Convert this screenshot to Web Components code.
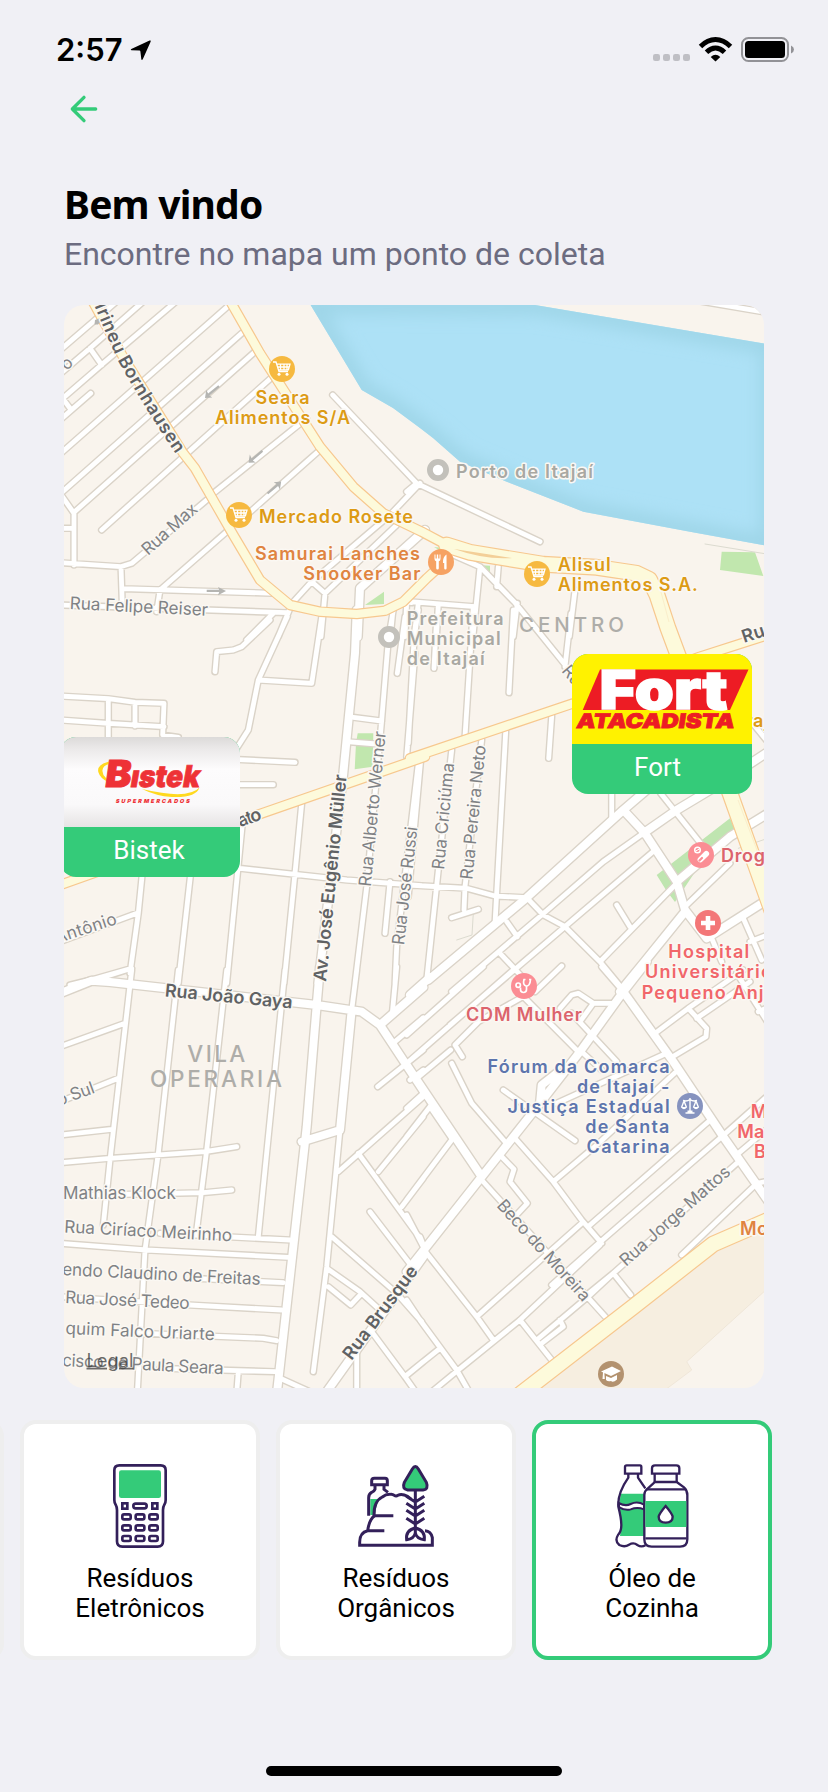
<!DOCTYPE html>
<html lang="pt-BR">
<head>
<meta charset="utf-8">
<title>Pontos de coleta</title>
<style>
html,body{margin:0;padding:0;background:#f0f0f5}
body{width:828px;height:1792px;overflow:hidden;font-family:Roboto,"Liberation Sans",sans-serif}
</style>
</head>
<body>
<collect-screen></collect-screen>
<script>
const define = (name, html, setup) => {
  const tpl = document.createElement('template');
  tpl.innerHTML = html;
  customElements.define(name, class extends HTMLElement {
    constructor() {
      super();
      this.attachShadow({ mode: 'open' }).appendChild(tpl.content.cloneNode(true));
    }
    connectedCallback() { if (setup) setup(this.shadowRoot, this); }
  });
};

/* ---------- status bar ---------- */
define('status-bar', `
<style>
:host{display:flex;justify-content:space-between;align-items:flex-start;height:89px;box-sizing:border-box;padding:31px 33px 0 56px;color:#000}
.left{display:flex;gap:7px}
.time{font:600 31px/37px Inter,sans-serif}
.left svg{margin-top:8px}
.right{margin-top:4px}
</style>
<div class="left"><span class="time">2:57</span>
<svg width="22" height="22" viewBox="0 0 22 22"><path d="M1.3 10 19.6 1.6Q21.300 1 20.600 2.700L12.800 20.200Q11.600 21.800 11.300 20L10.400 12.400Q10.300 11.700 9.500 11.600L1.400 11.300Q.100 10.800 1.300 10Z"/></svg></div>
<svg class="right" width="142" height="28" viewBox="653 35 142 28">
<g fill="#bfbfc4"><rect x="653" y="54" width="7" height="7" rx="2.200"/><rect x="663" y="54" width="7" height="7" rx="2.200"/><rect x="673" y="54" width="7" height="7" rx="2.200"/><rect x="683" y="54" width="7" height="7" rx="2.200"/></g>
<g fill="none" stroke="#000" stroke-width="4.900"><path d="M700.500 46.500Q707.500 39.500 715.500 39.500T730.500 46.500"/><path d="M706.500 52.300Q710.800 48 715.500 48T724.500 52.300"/></g>
<path d="M710.700 57Q715.500 52.600 720.300 57L715.500 61.500Z"/>
<rect x="742" y="38" width="46" height="23" rx="6.500" fill="none" stroke="#929296" stroke-width="2"/>
<rect x="745" y="41" width="40" height="17" rx="3.500"/>
<path d="M791 45.500Q794 47 794 49.500T791 53.500Z" fill="#929296"/>
</svg>`);

/* ---------- header ---------- */
define('page-header', `
<style>
:host{display:flex;flex-direction:column;padding:0 64px;height:216px;box-sizing:border-box}
h1{margin:49px 0 0;font:700 39px/52px "Noto Sans",sans-serif;color:#000;letter-spacing:-.8px}
p{margin:5px 0 0;font:400 32px/38px Roboto,sans-serif;color:#6c6c80;white-space:nowrap}
svg{display:block}
</style>
<svg width="40" height="40" viewBox="0 0 24 24" fill="none" stroke="#34cb79" stroke-width="2" stroke-linecap="round" stroke-linejoin="round"><path d="M19 12H5M12 19l-7-7 7-7"/></svg>
<h1><slot name="title"></slot></h1>
<p><slot name="subtitle"></slot></p>`);

/* ---------- marker ---------- */
define('map-marker', `
<style>
:host{display:flex;flex-direction:column;position:absolute;width:180px;height:140px;border-radius:16px;overflow:hidden;background:#34cb79}
.pic{height:90px}
.pic ::slotted(svg){display:block}
.name{flex:1;display:flex;align-items:center;justify-content:center;color:#fff;font:400 26px/30px Roboto,sans-serif;padding:0 var(--name-shift,2px) 5px 0}
</style>
<div class="pic"><slot></slot></div><div class="name"><slot name="name"></slot></div>`);

/* ---------- category card ---------- */
define('item-card', `
<style>
:host{display:flex;flex:none;flex-direction:column;align-items:center;width:240px;height:240px;box-sizing:border-box;border:4px solid #eee;border-radius:16px;background:#fff;padding-top:40px}
:host([selected]){border-color:#34cb79}
.icon{width:84px;height:84px}
.icon ::slotted(svg){display:block;width:84px;height:84px}
.label{margin-top:15px;width:150px;text-align:center;font:400 26px/30px Roboto,sans-serif;color:#000}
</style>
<div class="icon"><slot name="icon"></slot></div><div class="label"><slot></slot></div>`);

define('home-indicator', `
<style>:host{display:block;width:296px;height:10px;border-radius:5px;background:#000;margin:106px auto 0}</style>`);

/* ---------- street map ---------- */
/* Each sheet has an origin in screen pixels; its points are in thirds of a pixel. */
const SHEETS = {
  A: [60, 300], B: [410, 300], C: [60, 620], D: [410, 620], E: [60, 970], F: [410, 970]
};
const MINOR = {
 A: `-5,155 175,0|0,222 90,145 255,0|0,302 130,190 350,3|90,145 125,195|92,280 0,360|0,285 30,325|0,462 505,18|0,582 545,100|42,637 585,155|125,690 640,228|460,580 740,355|440,600 215,790 182,800 0,788|560,645 740,485 780,450|500,695 300,870 290,935|0,580 42,640 42,795|0,685 42,685|183,800 187,915|190,866 640,880|0,915 680,938|690,925 655,1010|690,920 705,900 755,845 990,645 1080,550|755,845 795,880 1010,675|795,880 783,1010|640,940 560,1020|818,285 1070,550|1000,920 990,1020|1030,905 1055,908|1040,905 1035,1010`,
 B: `-10,575 20,550|20,550 390,725|130,765 210,800 315,908 390,1000|0,905 195,920|210,800 190,1000|25,910 12,1010|85,912 80,1000|322,910 310,1010|495,870 478,1010|265,800 260,860|850,0 1110,44`,
 C: `630,0 545,80 520,90 470,95 465,155|682,-10 595,180 565,330 530,385|785,-10 755,190 595,180|0,228 145,236 225,247 312,250 308,345 355,352|145,236 145,360|225,247 225,318|0,300 145,310 312,320|880,292 965,303|860,365 950,372|520,418 705,427|520,494 640,494|725,550 705,760 672,1090|548,600 500,1090|540,745 860,780 1085,797|392,760 355,1090|247,760 235,880 210,1060|0,965 235,878|30,1095 100,1078 215,1045|990,785 975,940|1000,-30 985,60 965,300 920,800 885,1090|1035,-10 1012,160|1065,100 1040,410|1075,430 1010,980 1005,1090`,
 D: `25,-30 12,60 -5,370|32,420 -5,830|80,-10 72,145|190,-40 165,350|310,-30 297,218|483,-20 465,140|365,10 470,140 530,230|125,390 85,750 50,1080|215,360 165,800 162,870|125,893 205,868|287,335 255,910|425,288 416,415|605,510 605,600|-5,795 170,805 255,828 350,833|350,833 400,885 465,920 570,1025 640,1110|700,640 580,725 395,885 125,1115|735,690 465,920 190,1155|800,790 570,1025|620,855 660,920|290,905 322,950|270,1000 345,1080|455,1038 375,1115|752,520 880,680|830,855 960,730|905,955 935,1025|1000,895 1055,1020|1020,965 1110,930|1020,300 1110,410`,
 E: `215,0 150,570 130,765|355,0 295,550 255,840 232,1270|500,0 440,540 410,780|675,0 595,800|890,0 875,120|1010,-10 997,130|120,25 215,-5|0,230 195,160|0,395 175,325|0,495 155,478|0,578 150,565 435,545 530,530|100,675 430,668 515,660|0,820 260,840 685,862|300,790 690,810|400,925 670,938|0,980 390,1005 665,1020|200,1088 610,1105 650,1112|300,1195 645,1205|535,1205 530,1270|660,1225 760,1270|835,605 1090,380|895,550 1080,805|955,605 1090,440|1025,710 1090,625|930,725 1060,895|815,800 1010,970 1085,1055|800,895 900,965 960,1020|805,950 872,1005 905,970|1005,215 1090,143|953,350 1090,240|1050,330 1090,300|890,1140 890,1270|935,1085 1035,1220 1070,1270|1035,1220 1090,1175|840,480 800,890 760,1205`,
 F: `190,105 120,165|375,60 205,155 135,225 157,260|0,75 60,22|345,85 505,245|-10,195 220,-10|-10,280 310,0|122,240 20,325|40,370 -10,415|125,505 60,410|60,410 -10,500|125,510 -10,690|30,800 50,850 200,1040 250,1110|-10,735 50,850|-10,990 30,1050 140,1200 180,1270|-10,1215 90,1135|60,1270 145,1200 330,1050 570,825|200,1040 515,760|215,630 590,1045|275,560 312,598 300,635 352,700 310,745|125,280 185,400 285,515|280,360 495,512|315,505 430,635 515,750 575,820|430,635 560,525 795,308|440,400 770,250|540,765 895,455|560,825 935,500 1110,345|985,550 1110,445|425,945 560,825|530,975 610,910 980,580|610,910 662,975|330,1050 425,1170|380,1110 540,975 610,910|395,1120 460,1070 450,1050|815,855 1030,650|450,115 485,75 505,70 550,100 605,100|550,100 510,155|485,130 620,275|515,245 575,300|735,190 835,115 1000,0|835,115 890,175 888,200 785,262|860,145 1020,35|980,10 1075,160|1045,125 1090,105|575,-10 640,65|1040,640 1090,630`
};
const MAJOR = {
 A: `1095,690 900,865 893,1010`,
 C: `890,-30 885,100 850,460 775,1090`,
 E: `780,-10 770,105 740,470 650,1275|0,70 95,32 150,36 770,105 905,125 960,165 1090,362|960,165 1090,52|875,120 840,480 725,515|800,1265 1090,860`,
 D: `55,1080 350,833 640,570 780,450|640,570 705,640 800,785 825,870 890,955 1110,815|825,875 700,1030 630,1115|700,640 800,570 900,510 1110,372|800,785 960,650 1110,558`,
 F: `-10,285 215,620|-10,905 215,620 390,400 510,245 640,65 710,-25|390,400 395,345 440,310|640,65 790,275 940,500 1090,715|0,75 60,22`
};
const YELLOW = {
 A: `85,-20 190,172 370,460 405,505 520,705 600,840 690,915 780,935 890,942 975,932 1030,905 1100,835 1160,780|500,-15 600,160 780,440 880,560 970,640 1085,695 1160,735`,
 C: `0,795 260,703 620,575 1095,410`,
 D: `0,415 490,250 870,110 1120,30`
};
const WIDE = {
 B: `110,735 180,757 400,793 560,802 680,820 718,838 741,885 774,985 802,1060 960,1480 1085,1830`,
 F: `315,1285 670,1010 910,822 1110,735`
};
const HAIR = { B: `885,732 1070,762`, D: `190,880 186,945 140,960|1070,656 985,685|940,740 820,850` };
const toPath = set => Object.entries(set).map(([k, s]) => s.split('|').map(l =>
  'M' + l.trim().split(' ').map(p => {
    const [x, y] = p.split(',').map(Number), o = SHEETS[k];
    return (o[0] + x / 3).toFixed(1) + ' ' + (o[1] + y / 3).toFixed(1);
  }).join('L')).join('')).join('');

/* text, x, y, width, angle, class */
const LABELS = [
 ['Rua Max',148,556,68,-41.8,'s'],['Rua Felipe Reiser',69.5,609,138.5,2.8,'s'],['o',66.5,371,10,-42,'s'],
 ['Rua Alberto Werner',370.8,887,156,-84.5,'s'],['Rua José Russi',404,945.500,119,-83.5,'s'],
 ['Rua Criciúma',444,870,107,-84.600,'s'],['Rua Pereira Neto',472.3,880,135,-84.3,'s'],
 ['Antônio',57,943.500,64,-18,'s'],['o Sul',59,1106,39,-20,'s'],
 ['Mathias Klock',63,1198.6,113,0,'s'],['Rua Ciríaco Meirinho',64,1232.5,168,3,'s'],
 ['endo Claudino de Freitas',62,1275,198.5,2.9,'s'],['Rua José Tedeo',65,1303,124.5,2.8,'s'],
 ['quim Falco Uriarte',65.2,1334,149.5,2.4,'s'],['cisco de Paula Seara',62,1366,161.5,2.9,'s'],
 ['Beco do Moreira',496,1206,130,48,'s'],['Rua Jorge Mattos',626,1267,141,-41.6,'s'],['Rua',561,671,30,50,'s'],
 ['Av. José Eugênio Müller',326,982,208,-84.3,'b'],['Rua João Gaya',164.5,996.5,128,5.4,'b'],
 ['Rua Brusque',351.5,1361,112,-53.2,'b'],['ato',240,827,24,-19,'b'],['Rua',744,643,34,-18,'b'],
 ['VILA',187.3,1062,58,0,'d'],['OPERARIA',150,1087.3,132,0,'d'],['CENTRO',519,631.6,105,0,'d2'],
 ['Seara',255.500,404,54,0,'p y'],['Alimentos S/A',215,424,135,0,'p y'],['Mercado Rosete',259,522.7,154,0,'p y'],
 ['Alisul',557.7,571,53,0,'p y'],['Alimentos S.A.',557.7,591,140,0,'p y'],['aj',753,727,16,0,'p y'],
 ['Samurai Lanches',255,559.7,165,0,'p o'],['Snooker Bar',303.3,579.7,117,0,'p o'],['Mo',740,1235,28,0,'p o'],
 ['Porto de Itajaí',456,478,137,0,'p g'],['Prefeitura',406.7,625,97,0,'p g'],['Municipal',406.7,645,94,0,'p g'],['de Itajaí',406.7,665,78,0,'p g'],
 ['Drog',721,862.3,44,0,'p r'],['CDM Mulher',466,1020.7,116,0,'p r'],
 ['Hospital',668.3,958.3,81,0,'p h'],['Universitário',645,978.3,127,0,'p h'],['Pequeno Anjo',641.7,999,134,0,'p h'],
 ['M',750.7,1117.7,16,0,'p h'],['Ma',737.3,1137.7,27,0,'p h'],['B',754,1157.7,12,0,'p h'],
 ['Fórum da Comarca',487.600,1073.3,182,0,'p v'],['de Itajaí -',577,1093.3,92.5,0,'p v'],['Justiça Estadual',507.6,1113.3,162,0,'p v'],
 ['de Santa',585.3,1133.3,84,0,'p v'],['Catarina',586.6,1153.3,83,0,'p v']
];
const CART = `<path d="M-9-7h3l3 9.500h9M-5.500-4.800h13.500l-1.600 5.600h-10M-1.500-4.500v5.500M2-4.500v5.500M5-4.500v5M-5-2h12" stroke="#fff" stroke-width="1.300" fill="none"/><circle cx="-3" cy="5.300" r="1.500" fill="#fff"/><circle cx="5" cy="5.300" r="1.500" fill="#fff"/>`;
const PINS = [
 [282,369,'#f6b940',CART],[239,515,'#f6b940',CART],[537,574,'#f6b940',CART],
 [441,562,'#f6a263',`<path d="M-6.500-7.500v4.500Q-6.500-1.200-4.800-.8V6.200Q-4.800 7.500-3.500 7.500T-2.200 6.200V-.8Q-.5-1.200-.5-3v-4.500h-1v4h-1.300v-4h-1.400v4h-1.300v-4zM5.500-7.500Q1.500-5 2 1h1.200v5.200q0 1.300 1.200 1.300t1.200-1.300z" fill="#fff"/>`],
 [701,855,'#fb8d94',`<circle cx="-3.500" cy="-5" r="2.800" fill="none" stroke="#fff" stroke-width="1.500"/><path d="M-5.500-4l4-2" stroke="#fff"/><rect x="-6.500" y="-2.800" width="14" height="5.600" rx="2.800" transform="translate(2 2)rotate(-45)" fill="#fff"/><path d="M-1.500 5.500l2.500-2.500" stroke="#fb8d94" stroke-width="2.200" stroke-linecap="round"/>`],
 [708,923,'#f37778',`<path d="M-2.300-7h4.600v4.700H7v4.600H2.300V7h-4.600V2.300H-7v-4.600h4.700z" fill="#fff"/>`],
 [524,986,'#fb8d94',`<g fill="none" stroke="#fff" stroke-width="1.700"><path d="M1.500-6.500h-1.500q-1.500 5.500 2 6.500 4 .5 4.500-6.500H5M2.500 0v3.500q0 3-3 3t-3-3V1.500"/><circle cx="-5.800" cy="-.8" r="2.200"/></g>`],
 [690,1106,'#8693bf',`<g fill="none" stroke="#fff" stroke-width="1.400"><path d="M0-8V7M-4.500 7h9M-7-5.500q4 1.200 7-1 3 2.200 7 1M-6-5l-2.500 6.500M-6-5l2.500 6.500M6-5l-2.500 6.500M6-5l2.500 6.500"/></g><path d="M-9 1h6q-3 4.500-6 0zM3 1h6q-3 4.500-6 0zM-2.500 4.500h5V7h-5z" fill="#fff"/>`],
 [611,1374,'#b3926f',`<path d="M-10-2.500L1-7.500 10-3 0 2zM-5 2l5 2 6-3v4.500Q2 9 0 7-3 8-5 6zM-8-1.500h1.300l.5 6.500h-2.300z" fill="#fff"/>`]
];
define('street-map', `
<style>
:host{display:block;width:700px;height:1083px}
svg{display:block}
text{font-family:Inter,"Liberation Sans",sans-serif;paint-order:stroke;stroke:#fbf8f3;stroke-width:3px;stroke-linejoin:round}
.s{font-size:17.200px;fill:#808285}.b{font-size:18px;font-weight:600;fill:#606264}
.p{font-size:18px;font-weight:600}
.d{font-size:22.500px;font-weight:500;fill:#aeada9;stroke:none}.d2{font-size:20.500px;font-weight:500;fill:#aeada9;stroke:none}
.y{fill:#dd9b15}.o{fill:#e08440}.g{fill:#a9a8a2}.r{fill:#dc646c}.h{fill:#f1666a}.v{fill:#5d75ad}
.legal{font-size:18px;stroke:none;fill:#3c3c3c;fill-opacity:.75;text-decoration:underline;text-decoration-thickness:2px}
</style>
<svg width="700" height="1083" viewBox="64 305 700 1083">
<defs>
<path id="w" d="M310 304L361.700 390 393 408 420 428 433.300 438.300 460 461.700 506.700 481.700 583.300 511.700 690 531.700 770 546.300V344.500L535 305Z"/>
<clipPath id="wc"><use href="#w"/></clipPath><filter id="bl"><feGaussianBlur stdDeviation="8"/></filter>
<path id="ib" d="M94.500 305.500Q112 350 121 366 145 409 178 457"/>
</defs>
<path fill="#f9f4ed" d="M64 305h700v1083H64z"/>
<path fill="#f6eee0" d="M533 1388.500L720 1250 764 1231.700V1291.700L686.700 1361.700 691.700 1370 665 1390Z"/>
<path fill="none" stroke="#efe6d8" d="M764 1291.700L686.700 1361.700 691.700 1370 665 1390"/>
<use href="#w" fill="#ade1f6"/><g clip-path="url(#wc)"><use href="#w" fill="none" stroke="#9fd6e8" stroke-width="20" filter="url(#bl)"/></g>
<g fill="#c1e7ae"><path d="M721.700 551.700L755 552.300 763.300 576 720 570zM365 605L384 591.700V604zM478 565L490 565.700V577zM434 547l10 1v5zM357.700 733.300H373.300L372.700 766.700 354.700 769.300 356 743z"/>
<path d="M656.700 875L730 818.300 736 832 699 866 675 902 666 890z" fill="#bfe5b0"/></g>
<g id="roads" fill="none" stroke-linejoin="round"></g>
<g fill="#b5b5b2"><path d="M218.300 385.200l1.400 1.700-10.300 8.700 2.900 2L205 398l1.300-8.300 1.800 3.900zM261.700 450l1.400 1.700-10.300 8.700 2.900 2-7.200.4 1.300-8.300 1.800 3.900zM268.200 494.300l-1.400-1.600 9.800-8.700-2.900-1.800 7.500-.6-1.300 7.800-1.800-3.500zM206.700 592v-2.200h12.500l-1.200-2.800 8 4.100-8 4.100 1.200-3.100zM102 317.500l1.300 1.600-5.300 5.500h-3.500l.5-4.500z"/></g>
<g id="labels"></g>
<text class="b" textLength="170" lengthAdjust="spacing"><textPath href="#ib">Irineu Bornhausen</textPath></text>
<g id="pins"></g>
<g fill="#fff" stroke="#c3c1bb" stroke-width="5.800"><circle cx="438" cy="470" r="8.100"/><circle cx="389" cy="637" r="8.100"/></g>
<text class="legal" x="86.500" y="1366.700" textLength="47" lengthAdjust="spacingAndGlyphs">Legal</text>
</svg>`, root => {
  const mi = toPath(MINOR), ma = toPath(MAJOR), ye = toPath(YELLOW), wi = toPath(WIDE);
  const p = (d, c, w) => `<path d="${d}" stroke="${c}" stroke-width="${w}" stroke-linecap="round"/>`;
  root.getElementById('roads').innerHTML =
    p(toPath(HAIR), '#dcdbd0', 1) + p(mi, '#dad3c8', 7.6) + p(ma, '#dad3c8', 10.6) + p(mi, '#fff', 4.8) + p(ma, '#fff', 7.9) +
    p(ye, '#f7c88f', 10.6) + p(wi, '#f7c88f', 17) + p(ye, '#fdfadb', 8.2) + p(wi, '#fdfadb', 14.6) +
    '<path d="M454 549Q485 560 512 558Q480 553 454 549Z" fill="#f3cf98"/><path d="M738 800L763 866M661 592L669 622" stroke="#faeecb" stroke-width="1"/>';
  root.getElementById('labels').innerHTML = LABELS.map(([t, x, y, w, a, c]) =>
    `<text class="${c}" transform="translate(${x} ${y})rotate(${a})" textLength="${w}" lengthAdjust="spacing">${t}</text>`).join('');
  root.getElementById('pins').innerHTML = PINS.map(([x, y, c, g]) =>
    `<g transform="translate(${x} ${y})"><circle r="13" fill="${c}"/>${g}</g>`).join('');
});

/* ---------- screen ---------- */
define('collect-screen', `
<style>
:host{display:flex;flex-direction:column;width:828px;height:1792px;background:#f0f0f5;overflow:hidden}
.map{position:relative;width:700px;height:1083px;margin:0 64px;border-radius:20px;overflow:hidden;flex:none}
.bistek{left:-4px;top:432px}.fort{left:508px;top:349px;--name-shift:9px}
.items{display:flex;gap:16px;margin:32px 0 0 -236px;flex:none}
.logo{font-family:Inter,sans-serif;font-weight:900}
</style>
<status-bar></status-bar>
<page-header><span slot="title">Bem vindo</span><span slot="subtitle">Encontre no mapa um ponto de coleta</span></page-header>
<div class="map">
<street-map></street-map>
<map-marker class="bistek"><svg width="180" height="90" viewBox="0 0 180 90">
<defs><linearGradient id="bg" x1="0" y1="0" x2="0" y2="1"><stop offset="0" stop-color="#dcdad9"/><stop offset=".13" stop-color="#ebe9e9"/><stop offset=".36" stop-color="#fdfcfd"/><stop offset=".75" stop-color="#faf9fa"/><stop offset="1" stop-color="#e6e4e4"/></linearGradient></defs>
<path fill="url(#bg)" d="M0 0h180v90H0z"/>
<path d="M49 24.500Q36 28 38.500 35.500 40 41 48 45L46 41Q42 37 42.500 33 43 28.500 49 27Z" fill="#ffd91f"/>
<path d="M82 52Q128 63 139.500 50.500Q136 61 112 60 96 59 82 52Z" fill="#ffd91f"/>
<g class="logo" fill="#ee3236" stroke="#ee3236"><text transform="translate(44 50.300)skewX(-8)" font-size="37" stroke-width="1" textLength="26" lengthAdjust="spacingAndGlyphs">B</text>
<text transform="translate(69.500 50.300)skewX(-10)" font-size="30" stroke-width=".8" textLength="69" lengthAdjust="spacingAndGlyphs">ıstek</text></g>
<text class="logo" transform="translate(55.500 66)skewX(-12)" font-size="5.600" fill="#ee3236" textLength="74">SUPERMERCADOS</text>
</svg><span slot="name">Bistek</span></map-marker>
<map-marker class="fort"><svg width="180" height="90" viewBox="0 0 180 90">
<path fill="#fff200" d="M0 0h180v90H0z"/><path fill="#ed1c24" d="M28 15.500H176.500L158 56H10.700z"/>
<text class="logo" x="27.500" y="55.300" font-size="54" fill="#fff" stroke="#fff" stroke-width="1.500" textLength="128" lengthAdjust="spacingAndGlyphs">Fort</text>
<text class="logo" transform="translate(3.700 73.600)skewX(-9)" font-size="20" fill="#ed1c24" stroke="#ed1c24" stroke-width=".8" textLength="158" lengthAdjust="spacingAndGlyphs">ATACADISTA</text>
</svg><span slot="name">Fort</span></map-marker>
</div>
<div class="items">
<item-card></item-card>
<item-card><svg slot="icon" viewBox="294 192 252 252" fill="none" stroke="#33205a" stroke-width="8">
<path d="M358 196H482Q497 196 497 211V300Q497 308 493 314 489 321 489 330V424Q489 440 473 440H367Q351 440 351 424V330Q351 321 347 314 343 308 343 300V211Q343 196 358 196Z"/>
<rect x="357" y="211" width="126" height="83" rx="7" fill="#34cb79" stroke="none"/>
<rect x="367" y="310" width="15" height="16"/><rect x="400" y="311" width="40" height="14" rx="7"/><rect x="457" y="310" width="15" height="16"/>
<g><rect x="367" y="343" width="25" height="15" rx="5"/><rect x="407" y="343" width="26" height="15" rx="5"/><rect x="448" y="343" width="25" height="15" rx="5"/></g>
<g transform="translate(0 33)"><rect x="367" y="343" width="25" height="15" rx="5"/><rect x="407" y="343" width="26" height="15" rx="5"/><rect x="448" y="343" width="25" height="15" rx="5"/></g>
<g transform="translate(0 65)"><rect x="367" y="343" width="25" height="15" rx="5"/><rect x="407" y="343" width="26" height="15" rx="5"/><rect x="448" y="343" width="25" height="15" rx="5"/></g>
</svg>Resíduos Eletrônicos</item-card>
<item-card><svg slot="icon" viewBox="27 27 252 252" fill="none" stroke="#33205a" stroke-width="9">
<path d="M76 132H104Q92 150 90 180H76Z" fill="#34cb79" stroke="none"/>
<path d="M80 89V77Q80 70 88 70H120Q127 70 127 77V89ZM90 90V103Q88 109 80 112 71 118 71 128V182M117 90V103L129 112"/>
<path d="M145 182H87Q86 138 112 126 122 118 134 118 142 116 148 121 153 125 159 121 167 116 178 120 187 122 198 132"/>
<path d="M89 182Q73 192 68 227M118 227H68Q44 232 44 262V271H262V248Q258 228 240 227"/>
<path d="M202 42Q211 27 220 42L244 82Q252 103 234 105H188Q170 102 178 82Z" fill="#34cb79"/>
<path d="M211 106V235M211 141L184 124M211 141L238 124M211 162L184 145M211 162L238 145M211 183L184 166M211 183L238 166M211 207L184 190M211 207L238 190"/>
<path d="M211 219Q181 226 185 254 207 252 211 234Q215 252 238 254 241 226 211 219Z"/>
</svg>Resíduos Orgânicos</item-card>
<item-card selected><svg slot="icon" viewBox="600 192 252 252" fill="none" stroke="#33205a" stroke-width="7">
<path d="M632 281H702V408H630Q638 370 627 320Z" fill="#34cb79" stroke="none"/>
<path d="M626 309Q646 320 662 312 682 302 702 314V328Q682 320 662 328 646 333 628 322Z" fill="#fff" stroke-width="6"/>
<path d="M650 196H690Q694 196 694 201V221H645V201Q645 196 650 196ZM655 222V233Q622 280 625 320 634 355 634 375 634 395 624 405 613 423 628 435 644 443 657 434 671 426 682 435 694 443 706 436M684 222V233L706 265"/>
<path d="M703 285Q703 273 713 266L735 246H800L822 262Q832 271 832 285V418Q832 440 810 440H725Q703 440 703 418Z" fill="#fff"/>
<path d="M706 303H829V381H706Z" fill="#34cb79" stroke="none"/>
<path d="M735 196H799Q808 196 808 205V221H726V205Q726 196 735 196ZM734 222V246M800 222V246M708 268H827M706 415H830"/>
<path d="M767 318Q747 342 746 350 746 367 767 368 788 367 788 350 787 342 767 318Z" fill="#fff"/>
</svg>Óleo de<br>Cozinha</item-card>
</div>
<home-indicator></home-indicator>`);
</script>
</body>
</html>
